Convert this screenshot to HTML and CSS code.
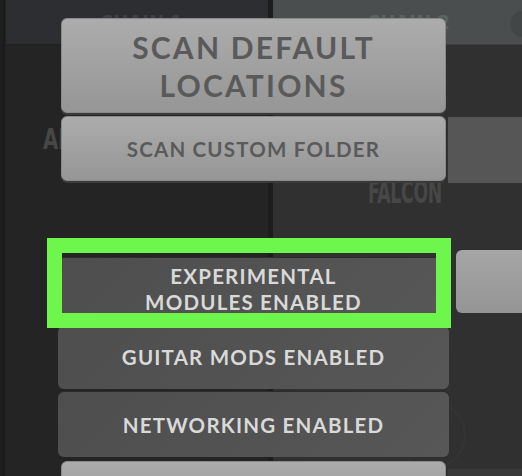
FILE: index.html
```html
<!DOCTYPE html>
<html>
<head>
    <title>Rack</title>
    <link rel="stylesheet" href="styles.css">
</head>
<body>
    <div class="rack">
        <!-- fondo: las dos cadenas -->
        <div class="chain chain-left">
            <div class="chain-head"><span class="chain-name">CHAIN 1</span></div>
            <div class="chain-body">
                <span class="slot-name slot-left">AL</span>
            </div>
        </div>
        <div class="divider"></div>
        <div class="chain chain-right">
            <div class="chain-head">
                <span class="chain-name">CHAIN 2</span>
                <span class="knob"></span>
            </div>
            <div class="chain-body">
                <div class="slot-box"></div>
                <span class="slot-name slot-right">FALCON</span>
                <div class="side-btn"></div>
                <div class="side-dial"></div>
                <div class="side-foot"></div>
            </div>
        </div>

        <!-- menu flotante -->
        <div class="menu">
            <button class="btn btn-light btn-big">SCAN DEFAULT<br>LOCATIONS</button>
            <button class="btn btn-light">SCAN CUSTOM FOLDER</button>
            <div class="spacer"></div>
            <button class="btn btn-dark btn-exp">EXPERIMENTAL<br>MODULES ENABLED</button>
            <button class="btn btn-dark btn-guitar">GUITAR MODS ENABLED</button>
            <button class="btn btn-dark">NETWORKING ENABLED</button>
            <button class="btn btn-light btn-last"></button>
        </div>

        <div class="highlight"></div>
    </div>
</body>
</html>
```

FILE: styles.css
```css
/* Estilos del rack */
body {
    margin: 0;
    padding: 0;
    background-color: #242424;
    font-family: "Lato", "Open Sans", sans-serif;
}

.rack {
    position: relative;
    display: flex;
    width: 522px;
    height: 476px;
    overflow: hidden;
}

.chain {
    display: flex;
    flex-direction: column;
}

.chain-left {
    width: 268px;
    border-left: 3px solid #1e1e1e;
    box-shadow: inset 2px 0 0 #1a1a1a;
    padding-left: 3px;
    box-sizing: border-box;
}

.divider {
    width: 5px;
    background-color: #1d1d1d;
}

.chain-right {
    flex: 1;
}

.chain-head {
    display: flex;
    align-items: flex-start;
    height: 44px;
    padding-left: 94px;
    background-color: #2d2e32;
    border-bottom: 1px solid #202020;
}

.chain-right .chain-head {
    background-color: #4a4e4e;
    padding-left: 94px;
    border-bottom-color: #3c3c3c;
}

.chain-name {
    margin-top: 10px;
    font-family: "Liberation Sans Narrow", "DejaVu Sans Condensed", sans-serif;
    font-weight: bold;
    font-size: 20px;
    color: #3f4146;
}

.chain-right .chain-name {
    color: #5d6262;
}

.knob {
    width: 26px;
    height: 26px;
    margin-top: 11px;
    border-radius: 50%;
    background-color: #424646;
    margin-left: auto;
    margin-right: -14px;
}

.chain-body {
    position: relative;
    flex: 1;
    background-color: #242424;
}

.chain-right .chain-body {
    background-color: #303030;
    display: flex;
    flex-direction: column;
    align-items: flex-end;
}

.slot-name {
    display: block;
    width: max-content;
    font-family: "Liberation Sans Narrow", "DejaVu Sans Condensed", sans-serif;
    font-weight: bold;
    color: #474747;
    transform-origin: left top;
    transform: scaleX(0.78);
}

.slot-left {
    margin: 78px 0 0 37px;
    font-size: 28px;
}

.slot-box {
    width: 74px;
    height: 66px;
    margin-top: 72px;
    background-color: #565656;
}

.slot-right {
    align-self: flex-start;
    margin: -6px 0 0 95px;
    font-size: 32px;
    line-height: 31px;
    letter-spacing: -0.5px;
    transform: scaleX(0.6);
}

.side-btn {
    width: 66px;
    height: 63px;
    margin-top: 42px;
    border-radius: 6px 0 0 6px;
    background: linear-gradient(#a6a6a6, #949494);
}

.side-dial {
    align-self: flex-start;
    width: 64px;
    height: 64px;
    margin: 88px 0 0 125px;
    border-radius: 50%;
    border: 2px solid #333535;
}

.side-foot {
    width: 74px;
    flex: 1;
    margin-top: 0;
    background-color: #393939;
}

/* Menu flotante */
.menu {
    position: absolute;
    top: 18px;
    left: 58px;
    width: 391px;
    display: flex;
    flex-direction: column;
    gap: 3px;
}

.btn {
    display: block;
    box-sizing: border-box;
    border: none;
    border-radius: 6px;
    font-family: "Lato", "Open Sans", sans-serif;
    font-weight: bold;
    font-size: 20.5px;
    line-height: 26px;
    letter-spacing: 1.2px;
    height: 65px;
    padding: 0;
}

.btn-light {
    margin: 0 3px;
    color: #5a5a5a;
    background: linear-gradient(#acacac, #969696);
    border: 1px solid #8a8a8a;
    box-shadow: 0 2px 0 #3a3a3a;
}

.btn-big {
    height: 95px;
    font-size: 30px;
    line-height: 38px;
    letter-spacing: 2.2px;
}

.btn-dark {
    color: #d9d9d9;
    background: linear-gradient(135deg, #4e4e4e, #575757);
    box-shadow: 0 -1px 0 #2c2c2c;
}

.btn-exp {
    padding-bottom: 4px;
}

.btn-guitar {
    height: 63px;
    padding-bottom: 2px;
}

.spacer {
    height: 71px;
}

.btn-last {
    height: 40px;
    margin-top: 1px;
}

.highlight {
    position: absolute;
    top: 238px;
    left: 47px;
    width: 374px;
    height: 60px;
    border: 15px solid #6ff64c;
}
```
